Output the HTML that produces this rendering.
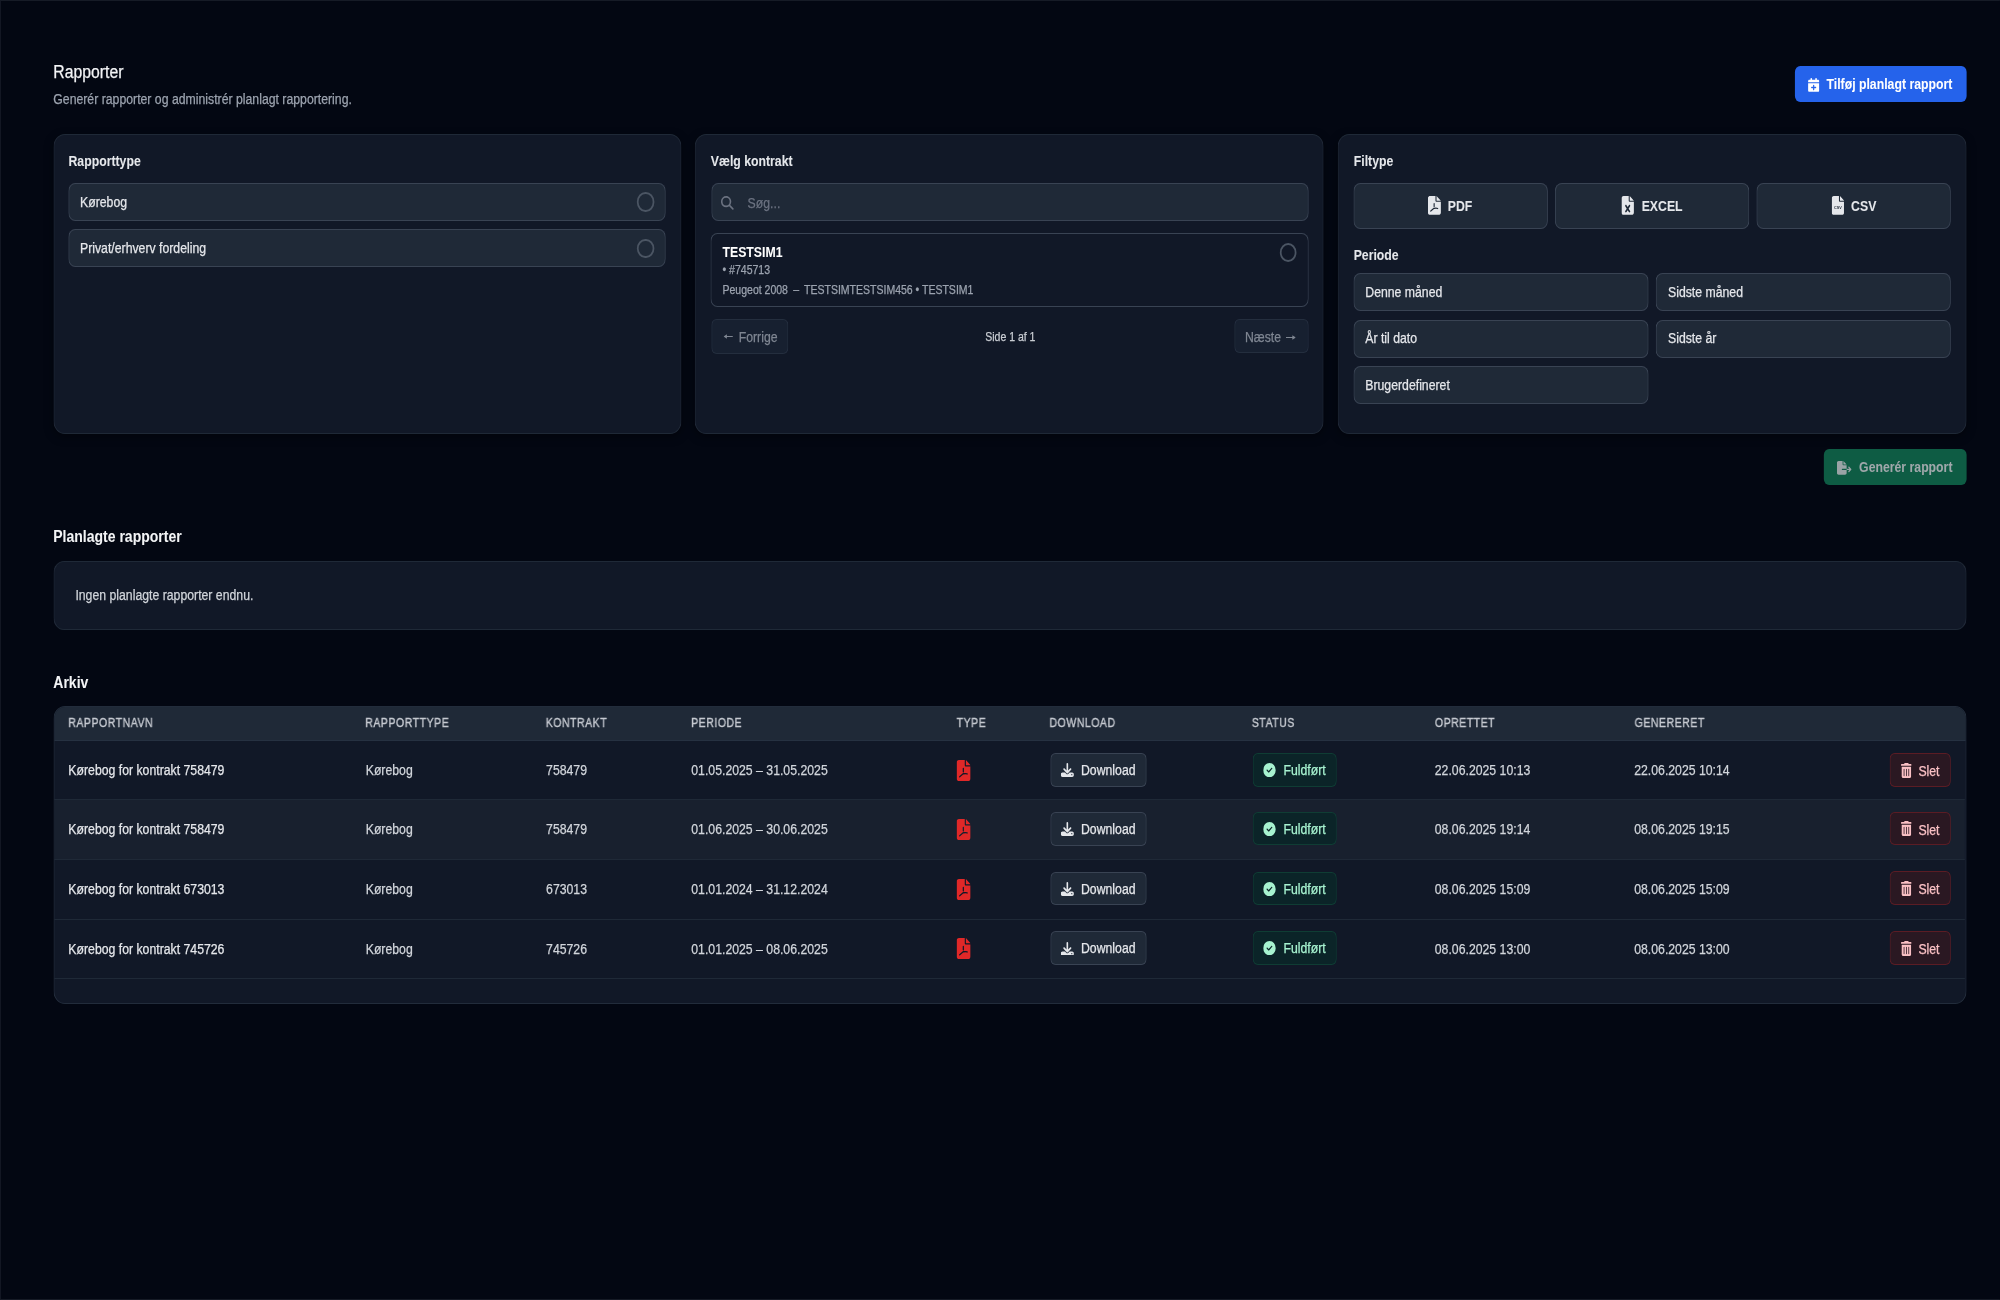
<!DOCTYPE html>
<html><head><meta charset="utf-8"><title>Rapporter</title>
<style>
html,body{margin:0;padding:0;background:#030712;width:2000px;height:1300px;overflow:hidden}
#s{position:absolute;left:0;top:0;width:2283.11px;height:1300px;transform:scaleX(0.876);transform-origin:0 0;font-family:"Liberation Sans",sans-serif}
.a{position:absolute;box-sizing:border-box;margin:0}
.t{white-space:nowrap;-webkit-text-stroke:0.25px currentColor}
</style></head><body><div id="s">
<div class="a" style="left:0;top:0;width:2283.11px;height:1px;background:#161b26"></div>
<div class="a" style="left:0;top:0;width:1.2px;height:1300px;background:#161b26"></div>
<div class="a" style="left:0;top:1299px;width:2283.11px;height:1px;background:#161b26"></div>
<div class="a t" style="left:60.84px;top:59.2px;font-size:18px;line-height:27px;color:#f3f4f6;">Rapporter</div>
<div class="a t" style="left:60.84px;top:88.8px;font-size:14px;line-height:21px;color:#9ca3af;">Generér rapporter og administrér planlagt rapportering.</div>
<div class="a" style="left:2048.52px;top:66.2px;width:196.35px;height:35.6px;background:#2563eb;border-radius:6px;"></div>
<svg class="a" style="left:2063.93px;top:78px;width:12.79px;height:13.8px;color:#fff;" viewBox="0 0 448 512" preserveAspectRatio="none"><path fill="currentColor" fill-rule="evenodd" d="M96 32V64H48C21.5 64 0 85.5 0 112v48H448V112c0-26.5-21.5-48-48-48H352V32c0-17.7-14.3-32-32-32s-32 14.3-32 32V64H160V32c0-17.7-14.3-32-32-32S96 14.3 96 32zM448 192H0V464c0 26.5 21.5 48 48 48H400c26.5 0 48-21.5 48-48V192zM224 248c13.3 0 24 10.7 24 24v56h56c13.3 0 24 10.7 24 24s-10.7 24-24 24H248v56c0 13.3-10.7 24-24 24s-24-10.7-24-24V376H144c-13.3 0-24-10.7-24-24s10.7-24 24-24h56V272c0-13.300 10.7-24 24-24z"/></svg>
<div class="a t" style="left:2085.05px;top:73.5px;font-size:14px;line-height:21px;color:#ffffff;font-weight:700;-webkit-text-stroke:0.05px currentColor;">Tilføj planlagt rapport</div>
<div class="a" style="left:60.5px;top:134px;width:717.24px;height:299.5px;background:#111827;border:1px solid #1f2937;border-left-color:#222b3a;border-right-color:#222b3a;border-radius:13px;box-shadow:0 3px 10px rgba(0,0,0,0.35);"></div>
<div class="a" style="left:793.38px;top:134px;width:717.81px;height:299.5px;background:#111827;border:1px solid #1f2937;border-left-color:#222b3a;border-right-color:#222b3a;border-radius:13px;box-shadow:0 3px 10px rgba(0,0,0,0.35);"></div>
<div class="a" style="left:1527.4px;top:134px;width:717.47px;height:299.5px;background:#111827;border:1px solid #1f2937;border-left-color:#222b3a;border-right-color:#222b3a;border-radius:13px;box-shadow:0 3px 10px rgba(0,0,0,0.35);"></div>
<div class="a t" style="left:78.2px;top:151px;font-size:14px;line-height:21px;color:#e5e7eb;font-weight:700;-webkit-text-stroke:0.05px currentColor;">Rapporttype</div>
<div class="a" style="left:77.63px;top:183px;width:682.65px;height:38.2px;background:#1f2937;border:1px solid #394353;border-left-color:#3e4858;border-right-color:#3e4858;border-radius:8px;"></div>
<div class="a t" style="left:91.32px;top:192px;font-size:14px;line-height:21px;color:#e5e7eb;">Kørebog</div>
<div class="a" style="left:727.07px;top:192.3px;width:19.6px;height:19.6px;border:2px solid #4b5563;border-radius:50%;"></div>
<div class="a" style="left:77.63px;top:229.3px;width:682.65px;height:38.2px;background:#1f2937;border:1px solid #394353;border-left-color:#3e4858;border-right-color:#3e4858;border-radius:8px;"></div>
<div class="a t" style="left:91.32px;top:238.3px;font-size:14px;line-height:21px;color:#e5e7eb;">Privat/erhverv fordeling</div>
<div class="a" style="left:727.07px;top:238.6px;width:19.6px;height:19.6px;border:2px solid #4b5563;border-radius:50%;"></div>
<div class="a t" style="left:811.42px;top:151px;font-size:14px;line-height:21px;color:#e5e7eb;font-weight:700;-webkit-text-stroke:0.05px currentColor;">Vælg kontrakt</div>
<div class="a" style="left:811.87px;top:183.2px;width:681.85px;height:37.6px;background:#1f2937;border:1px solid #394353;border-left-color:#3e4858;border-right-color:#3e4858;border-radius:8px;"></div>
<svg class="a" style="left:823.06px;top:195.9px;width:14.5px;height:13.8px;color:#6b7280;" viewBox="0 0 512 512" preserveAspectRatio="none"><path fill="currentColor" fill-rule="evenodd" d="M416 208c0 45.9-14.9 88.3-40 122.7L502.6 457.4c12.5 12.5 12.5 32.8 0 45.3s-32.8 12.5-45.3 0L330.7 376c-34.4 25.2-76.8 40-122.7 40C93.1 416 0 322.900 0 208S93.1 0 208 0S416 93.1 416 208zM208 352a144 144 0 1 0 0-288 144 144 0 1 0 0 288z"/></svg>
<div class="a t" style="left:853.42px;top:193px;font-size:14px;line-height:21px;color:#6b7280;">Søg...</div>
<div class="a" style="left:811.42px;top:233.2px;width:682.65px;height:74.3px;background:transparent;border:1px solid #394353;border-left-color:#3e4858;border-right-color:#3e4858;border-radius:8px;"></div>
<div class="a t" style="left:824.77px;top:242px;font-size:14px;line-height:21px;color:#ffffff;font-weight:700;-webkit-text-stroke:0.05px currentColor;">TESTSIM1</div>
<div class="a t" style="left:824.77px;top:261.2px;font-size:12px;line-height:18px;color:#9ca3af;">• #745713</div>
<div class="a t" style="left:824.77px;top:281.2px;font-size:12px;line-height:18px;color:#9ca3af;">Peugeot 2008 <span style="display:inline-block;margin:0 2.6px">–</span> TESTSIMTESTSIM456 • TESTSIM1</div>
<div class="a" style="left:1460.52px;top:242.6px;width:19.6px;height:19.6px;border:2px solid #4b5563;border-radius:50%;"></div>
<div class="a" style="left:811.64px;top:319.2px;width:88.81px;height:34.4px;background:#172030;border:1px solid #242e3e;border-left-color:#283243;border-right-color:#283243;border-radius:6px;"></div>
<svg class="a" style="left:826.37px;top:334.3px;width:10.5px;height:5px;color:#7f8692;" viewBox="0 0 100 60" preserveAspectRatio="none"><path fill="none" stroke="currentColor" stroke-width="14" d="M18 30H100"/><path fill="currentColor" d="M0 30L36 4V56z"/></svg>
<div class="a t" style="left:843.26px;top:327px;font-size:14px;line-height:21px;color:#7f8692;">Forrige</div>
<div class="a t" style="left:1124.66px;top:328px;font-size:12px;line-height:18px;color:#c9cdd3;">Side 1 af 1</div>
<div class="a" style="left:1408.68px;top:319.4px;width:85.16px;height:34.1px;background:#172030;border:1px solid #242e3e;border-left-color:#283243;border-right-color:#283243;border-radius:6px;"></div>
<div class="a t" style="left:1421.12px;top:327px;font-size:14px;line-height:21px;color:#7f8692;">Næste</div>
<svg class="a" style="left:1467.81px;top:334.5px;width:11.3px;height:5px;color:#7f8692;" viewBox="0 0 100 60" preserveAspectRatio="none"><path fill="none" stroke="currentColor" stroke-width="14" d="M0 30H82"/><path fill="currentColor" d="M100 30L64 4V56z"/></svg>
<div class="a t" style="left:1545.38px;top:150.9px;font-size:14px;line-height:21px;color:#e5e7eb;font-weight:700;-webkit-text-stroke:0.05px currentColor;">Filtype</div>
<div class="a" style="left:1544.98px;top:183.1px;width:222.03px;height:46px;background:#1f2937;border:1px solid #394353;border-left-color:#3e4858;border-right-color:#3e4858;border-radius:8px;"></div>
<svg class="a" style="left:1630.14px;top:196px;width:14.84px;height:18.8px;color:#e5e7eb;" viewBox="0 0 384 512" preserveAspectRatio="none"><path fill="currentColor" d="M0 64C0 28.7 28.7 0 64 0H224V128c0 17.7 14.3 32 32 32H384V448c0 35.3-28.7 64-64 64H64c-35.3 0-64-28.7-64-64V64zm384 64H256V0L384 128z"/><path fill="none" stroke="#1f2937" stroke-width="34" stroke-linecap="round" stroke-linejoin="round" d="M185 205V285M188 330L85 410M188 335C230 330 260 325 290 340"/></svg>
<div class="a t" style="left:1652.74px;top:196px;font-size:14px;line-height:21px;color:#e5e7eb;font-weight:700;-webkit-text-stroke:0.05px currentColor;">PDF</div>
<div class="a" style="left:1775.23px;top:183.1px;width:222.03px;height:46px;background:#1f2937;border:1px solid #394353;border-left-color:#3e4858;border-right-color:#3e4858;border-radius:8px;"></div>
<svg class="a" style="left:1851.48px;top:196px;width:14.16px;height:18.8px;color:#e5e7eb;" viewBox="0 0 384 512" preserveAspectRatio="none"><path fill="currentColor" fill-rule="evenodd" d="M64 0C28.7 0 0 28.7 0 64V448c0 35.3 28.7 64 64 64H320c35.3 0 64-28.7 64-64V160H256c-17.7 0-32-14.3-32-32V0H64zM256 0V128H384L256 0zM155.7 250.2L192 302.1l36.3-51.9c7.6-10.9 22.6-13.5 33.4-5.9s13.5 22.6 5.9 33.4L221.3 344l46.4 66.2c7.6 10.9 5 25.8-5.9 33.4s-25.8 5-33.4-5.9L192 385.8l-36.3 51.9c-7.6 10.9-22.6 13.5-33.4 5.9s-13.5-22.6-5.9-33.4L162.7 344l-46.4-66.2c-7.6-10.9-5-25.8 5.9-33.4s25.8-5 33.4 5.9z"/></svg>
<div class="a t" style="left:1874.09px;top:196px;font-size:14px;line-height:21px;color:#e5e7eb;font-weight:700;-webkit-text-stroke:0.05px currentColor;">EXCEL</div>
<div class="a" style="left:2005.14px;top:183.1px;width:222.03px;height:46px;background:#1f2937;border:1px solid #394353;border-left-color:#3e4858;border-right-color:#3e4858;border-radius:8px;"></div>
<svg class="a" style="left:2090.64px;top:196px;width:14.16px;height:18.8px;color:#e5e7eb;" viewBox="0 0 384 512" preserveAspectRatio="none"><path fill="currentColor" d="M0 64C0 28.7 28.7 0 64 0H224V128c0 17.7 14.3 32 32 32H384V448c0 35.3-28.7 64-64 64H64c-35.3 0-64-28.7-64-64V64zm384 64H256V0L384 128z"/><text x="192" y="365" text-anchor="middle" font-family="Liberation Sans" font-weight="700" font-size="118" fill="#1f2937">CSV</text></svg>
<div class="a t" style="left:2113.13px;top:196px;font-size:14px;line-height:21px;color:#e5e7eb;font-weight:700;-webkit-text-stroke:0.05px currentColor;">CSV</div>
<div class="a t" style="left:1545.32px;top:244.6px;font-size:14px;line-height:21px;color:#e5e7eb;font-weight:700;-webkit-text-stroke:0.05px currentColor;">Periode</div>
<div class="a" style="left:1545.09px;top:273.1px;width:336.99px;height:38.2px;background:#1f2937;border:1px solid #394353;border-left-color:#3e4858;border-right-color:#3e4858;border-radius:8px;"></div>
<div class="a t" style="left:1558.56px;top:281.9px;font-size:14px;line-height:21px;color:#e5e7eb;">Denne måned</div>
<div class="a" style="left:1890.3px;top:273.1px;width:336.87px;height:38.2px;background:#1f2937;border:1px solid #394353;border-left-color:#3e4858;border-right-color:#3e4858;border-radius:8px;"></div>
<div class="a t" style="left:1904.11px;top:281.9px;font-size:14px;line-height:21px;color:#e5e7eb;">Sidste måned</div>
<div class="a" style="left:1545.09px;top:319.5px;width:336.99px;height:38.2px;background:#1f2937;border:1px solid #394353;border-left-color:#3e4858;border-right-color:#3e4858;border-radius:8px;"></div>
<div class="a t" style="left:1558.56px;top:328.3px;font-size:14px;line-height:21px;color:#e5e7eb;">År til dato</div>
<div class="a" style="left:1890.3px;top:319.5px;width:336.87px;height:38.2px;background:#1f2937;border:1px solid #394353;border-left-color:#3e4858;border-right-color:#3e4858;border-radius:8px;"></div>
<div class="a t" style="left:1904.11px;top:328.3px;font-size:14px;line-height:21px;color:#e5e7eb;">Sidste år</div>
<div class="a" style="left:1545.09px;top:365.8px;width:336.99px;height:38.1px;background:#1f2937;border:1px solid #394353;border-left-color:#3e4858;border-right-color:#3e4858;border-radius:8px;"></div>
<div class="a t" style="left:1558.56px;top:374.6px;font-size:14px;line-height:21px;color:#e5e7eb;">Brugerdefineret</div>
<div class="a" style="left:2082.19px;top:449.4px;width:162.67px;height:35.2px;background:#0e5c44;border-radius:6px;"></div>
<svg class="a" style="left:2097.26px;top:461.1px;width:16.55px;height:13.8px;color:#9aa3a6;" viewBox="0 0 576 512" preserveAspectRatio="none"><path fill="currentColor" d="M0 64C0 28.7 28.7 0 64 0H224V128c0 17.7 14.3 32 32 32H384V288H216c-13.3 0-24 10.7-24 24s10.7 24 24 24H384V448c0 35.3-28.7 64-64 64H64c-35.3 0-64-28.7-64-64V64zM384 336V288H494.1l-39-39c-9.4-9.4-9.4-24.6 0-33.9s24.6-9.4 33.9 0l80 80c9.4 9.4 9.4 24.6 0 33.9l-80 80c-9.4 9.4-24.6 9.4-33.9 0s-9.4-24.6 0-33.9l39-39H384zm0-208H256V0L384 128z"/></svg>
<div class="a t" style="left:2122.26px;top:456.9px;font-size:14px;line-height:21px;color:#a0a8ab;font-weight:700;-webkit-text-stroke:0.05px currentColor;">Generér rapport</div>
<div class="a t" style="left:60.73px;top:525px;font-size:16px;line-height:24px;color:#f3f4f6;font-weight:700;-webkit-text-stroke:0.05px currentColor;">Planlagte rapporter</div>
<div class="a" style="left:60.73px;top:560.8px;width:2184.13px;height:69.6px;background:#111827;border:1px solid #1f2937;border-left-color:#222b3a;border-right-color:#222b3a;border-radius:12px;"></div>
<div class="a t" style="left:86.07px;top:585.4px;font-size:14px;line-height:21px;color:#d1d5db;">Ingen planlagte rapporter endnu.</div>
<div class="a t" style="left:60.84px;top:670.7px;font-size:16px;line-height:24px;color:#f3f4f6;font-weight:700;-webkit-text-stroke:0.05px currentColor;">Arkiv</div>
<div class="a" style="left:60.79px;top:706.2px;width:2183.85px;height:298.1px;background:#111827;border:1px solid #222c3b;border-left-color:#273141;border-right-color:#273141;border-radius:13px;overflow:hidden;"></div>
<div class="a" style="left:61.79px;top:707.2px;width:2181.85px;height:33.5px;background:#1f2937;border-radius:12px 12px 0 0;border-bottom:1px solid #263141"></div>
<div class="a t" style="left:77.97px;top:714.1px;font-size:12px;line-height:18px;color:#c6cad1;letter-spacing:0.6px;will-change:transform;-webkit-text-stroke:0.35px currentColor;">RAPPORTNAVN</div>
<div class="a t" style="left:417.47px;top:714.1px;font-size:12px;line-height:18px;color:#c6cad1;letter-spacing:0.6px;will-change:transform;-webkit-text-stroke:0.35px currentColor;">RAPPORTTYPE</div>
<div class="a t" style="left:623.4px;top:714.1px;font-size:12px;line-height:18px;color:#c6cad1;letter-spacing:0.6px;will-change:transform;-webkit-text-stroke:0.35px currentColor;">KONTRAKT</div>
<div class="a t" style="left:789.16px;top:714.1px;font-size:12px;line-height:18px;color:#c6cad1;letter-spacing:0.6px;will-change:transform;-webkit-text-stroke:0.35px currentColor;">PERIODE</div>
<div class="a t" style="left:1092.47px;top:714.1px;font-size:12px;line-height:18px;color:#c6cad1;letter-spacing:0.6px;will-change:transform;-webkit-text-stroke:0.35px currentColor;">TYPE</div>
<div class="a t" style="left:1198.06px;top:714.1px;font-size:12px;line-height:18px;color:#c6cad1;letter-spacing:0.6px;will-change:transform;-webkit-text-stroke:0.35px currentColor;">DOWNLOAD</div>
<div class="a t" style="left:1428.88px;top:714.1px;font-size:12px;line-height:18px;color:#c6cad1;letter-spacing:0.6px;will-change:transform;-webkit-text-stroke:0.35px currentColor;">STATUS</div>
<div class="a t" style="left:1637.9px;top:714.1px;font-size:12px;line-height:18px;color:#c6cad1;letter-spacing:0.6px;will-change:transform;-webkit-text-stroke:0.35px currentColor;">OPRETTET</div>
<div class="a t" style="left:1865.53px;top:714.1px;font-size:12px;line-height:18px;color:#c6cad1;letter-spacing:0.6px;will-change:transform;-webkit-text-stroke:0.35px currentColor;">GENERERET</div>
<div class="a" style="left:61.93px;top:799px;width:2181.56px;height:1px;background:#1f2937;"></div>
<div class="a t" style="left:77.97px;top:760.4px;font-size:14px;line-height:21px;color:#e5e7eb;">Kørebog for kontrakt 758479</div>
<div class="a t" style="left:417.47px;top:760.4px;font-size:14px;line-height:21px;color:#d1d5db;">Kørebog</div>
<div class="a t" style="left:623.4px;top:760.4px;font-size:14px;line-height:21px;color:#d1d5db;">758479</div>
<div class="a t" style="left:789.16px;top:760.4px;font-size:14px;line-height:21px;color:#d1d5db;">01.05.2025 – 31.05.2025</div>
<svg class="a" style="left:1091.55px;top:760px;width:15.98px;height:21px;color:#e02828;" viewBox="0 0 384 512" preserveAspectRatio="none"><path fill="currentColor" d="M0 64C0 28.7 28.7 0 64 0H224V128c0 17.7 14.3 32 32 32H384V448c0 35.3-28.7 64-64 64H64c-35.3 0-64-28.7-64-64V64zm384 64H256V0L384 128z"/><path fill="none" stroke="#111827" stroke-width="34" stroke-linecap="round" stroke-linejoin="round" d="M185 205V285M188 330L85 410M188 335C230 330 260 325 290 340"/></svg>
<div class="a" style="left:1198.63px;top:752.9px;width:110.27px;height:33.9px;background:#1f2937;border:1px solid #394353;border-left-color:#3e4858;border-right-color:#3e4858;border-radius:6px;"></div>
<svg class="a" style="left:1211.19px;top:763.2px;width:14.84px;height:13.9px;color:#e5e7eb;" viewBox="0 0 512 512" preserveAspectRatio="none"><path fill="currentColor" d="M288 32c0-17.7-14.3-32-32-32s-32 14.3-32 32V274.7l-73.4-73.4c-12.5-12.5-32.8-12.5-45.3 0s-12.5 32.8 0 45.3l128 128c12.5 12.5 32.8 12.5 45.3 0l128-128c12.5-12.5 12.5-32.8 0-45.3s-32.8-12.5-45.3 0L288 274.7V32zM64 352c-35.3 0-64 28.7-64 64v32c0 35.3 28.7 64 64 64H448c35.3 0 64-28.7 64-64V416c0-35.3-28.7-64-64-64H346.5l-45.3 45.3c-25 25-65.5 25-90.5 0L165.5 352H64zm368 56a24 24 0 1 1 0 48 24 24 0 1 1 0-48z"/></svg>
<div class="a t" style="left:1234.02px;top:759.9px;font-size:14px;line-height:21px;color:#e5e7eb;">Download</div>
<div class="a" style="left:1430.25px;top:753px;width:95.43px;height:33.5px;background:#0b2428;border:1px solid #0f3d34;border-left-color:#0f4036;border-right-color:#0f4036;border-radius:6px;"></div>
<svg class="a" style="left:1442.35px;top:762.9px;width:14.27px;height:14.3px;color:#a7f3d0;" viewBox="0 0 512 512" preserveAspectRatio="none"><path fill="currentColor" d="M256 512A256 256 0 1 0 256 0a256 256 0 1 0 0 512zM369 209L241 337c-9.4 9.4-24.6 9.4-33.9 0l-64-64c-9.4-9.4-9.4-24.6 0-33.9s24.6-9.4 33.9 0l47 47L335 175c9.4-9.4 24.6-9.4 33.9 0s9.4 24.6 0 33.9z"/></svg>
<div class="a t" style="left:1465.18px;top:760px;font-size:14px;line-height:21px;color:#a7f3d0;">Fuldført</div>
<div class="a t" style="left:1637.9px;top:760.4px;font-size:14px;line-height:21px;color:#d1d5db;">22.06.2025 10:13</div>
<div class="a t" style="left:1865.53px;top:760.4px;font-size:14px;line-height:21px;color:#d1d5db;">22.06.2025 10:14</div>
<div class="a" style="left:2156.85px;top:752.8px;width:70.32px;height:33.8px;background:#2a1822;border:1px solid #5b1c24;border-left-color:#611e26;border-right-color:#611e26;border-radius:6px;"></div>
<svg class="a" style="left:2169.63px;top:762.6px;width:12.56px;height:15px;color:#f9c0c4;" viewBox="0 0 448 512" preserveAspectRatio="none"><path fill="currentColor" d="M135.2 17.7C140.6 6.8 151.7 0 163.8 0H284.2c12.1 0 23.2 6.8 28.6 17.7L320 32h96c17.7 0 32 14.3 32 32s-14.3 32-32 32H32C14.3 96 0 81.7 0 64S14.3 32 32 32h96l7.2-14.3zM32 128H416V448c0 35.3-28.7 64-64 64H96c-35.3 0-64-28.7-64-64V128zm96 64c-8.8 0-16 7.2-16 16V432c0 8.8 7.2 16 16 16s16-7.2 16-16V208c0-8.8-7.2-16-16-16zm96 0c-8.8 0-16 7.2-16 16V432c0 8.8 7.2 16 16 16s16-7.2 16-16V208c0-8.8-7.2-16-16-16zm96 0c-8.8 0-16 7.2-16 16V432c0 8.8 7.2 16 16 16s16-7.2 16-16V208c0-8.8-7.2-16-16-16z"/></svg>
<div class="a t" style="left:2189.95px;top:760.8px;font-size:14px;line-height:21px;color:#f9c0c4;">Slet</div>
<div class="a" style="left:61.93px;top:799.5px;width:2181.56px;height:59.8px;background:#18202e;"></div>
<div class="a" style="left:61.93px;top:858.8px;width:2181.56px;height:1px;background:#1f2937;"></div>
<div class="a t" style="left:77.97px;top:819.2px;font-size:14px;line-height:21px;color:#e5e7eb;">Kørebog for kontrakt 758479</div>
<div class="a t" style="left:417.47px;top:819.2px;font-size:14px;line-height:21px;color:#d1d5db;">Kørebog</div>
<div class="a t" style="left:623.4px;top:819.2px;font-size:14px;line-height:21px;color:#d1d5db;">758479</div>
<div class="a t" style="left:789.16px;top:819.2px;font-size:14px;line-height:21px;color:#d1d5db;">01.06.2025 – 30.06.2025</div>
<svg class="a" style="left:1091.55px;top:818.8px;width:15.98px;height:21px;color:#e02828;" viewBox="0 0 384 512" preserveAspectRatio="none"><path fill="currentColor" d="M0 64C0 28.7 28.7 0 64 0H224V128c0 17.7 14.3 32 32 32H384V448c0 35.3-28.7 64-64 64H64c-35.3 0-64-28.7-64-64V64zm384 64H256V0L384 128z"/><path fill="none" stroke="#18202e" stroke-width="34" stroke-linecap="round" stroke-linejoin="round" d="M185 205V285M188 330L85 410M188 335C230 330 260 325 290 340"/></svg>
<div class="a" style="left:1198.63px;top:811.7px;width:110.27px;height:33.9px;background:#1f2937;border:1px solid #394353;border-left-color:#3e4858;border-right-color:#3e4858;border-radius:6px;"></div>
<svg class="a" style="left:1211.19px;top:822px;width:14.84px;height:13.9px;color:#e5e7eb;" viewBox="0 0 512 512" preserveAspectRatio="none"><path fill="currentColor" d="M288 32c0-17.7-14.3-32-32-32s-32 14.3-32 32V274.7l-73.4-73.4c-12.5-12.5-32.8-12.5-45.3 0s-12.5 32.8 0 45.3l128 128c12.5 12.5 32.8 12.5 45.3 0l128-128c12.5-12.5 12.5-32.8 0-45.3s-32.8-12.5-45.3 0L288 274.7V32zM64 352c-35.3 0-64 28.7-64 64v32c0 35.3 28.7 64 64 64H448c35.3 0 64-28.7 64-64V416c0-35.3-28.7-64-64-64H346.5l-45.3 45.3c-25 25-65.5 25-90.5 0L165.5 352H64zm368 56a24 24 0 1 1 0 48 24 24 0 1 1 0-48z"/></svg>
<div class="a t" style="left:1234.02px;top:818.7px;font-size:14px;line-height:21px;color:#e5e7eb;">Download</div>
<div class="a" style="left:1430.25px;top:811.8px;width:95.43px;height:33.5px;background:#0b2428;border:1px solid #0f3d34;border-left-color:#0f4036;border-right-color:#0f4036;border-radius:6px;"></div>
<svg class="a" style="left:1442.35px;top:821.7px;width:14.27px;height:14.3px;color:#a7f3d0;" viewBox="0 0 512 512" preserveAspectRatio="none"><path fill="currentColor" d="M256 512A256 256 0 1 0 256 0a256 256 0 1 0 0 512zM369 209L241 337c-9.4 9.4-24.6 9.4-33.9 0l-64-64c-9.4-9.4-9.4-24.6 0-33.9s24.6-9.4 33.9 0l47 47L335 175c9.4-9.4 24.6-9.4 33.9 0s9.4 24.6 0 33.9z"/></svg>
<div class="a t" style="left:1465.18px;top:818.8px;font-size:14px;line-height:21px;color:#a7f3d0;">Fuldført</div>
<div class="a t" style="left:1637.9px;top:819.2px;font-size:14px;line-height:21px;color:#d1d5db;">08.06.2025 19:14</div>
<div class="a t" style="left:1865.53px;top:819.2px;font-size:14px;line-height:21px;color:#d1d5db;">08.06.2025 19:15</div>
<div class="a" style="left:2156.85px;top:811.6px;width:70.32px;height:33.8px;background:#2a1822;border:1px solid #5b1c24;border-left-color:#611e26;border-right-color:#611e26;border-radius:6px;"></div>
<svg class="a" style="left:2169.63px;top:821.4px;width:12.56px;height:15px;color:#f9c0c4;" viewBox="0 0 448 512" preserveAspectRatio="none"><path fill="currentColor" d="M135.2 17.7C140.6 6.8 151.7 0 163.8 0H284.2c12.1 0 23.2 6.8 28.6 17.7L320 32h96c17.7 0 32 14.3 32 32s-14.3 32-32 32H32C14.3 96 0 81.7 0 64S14.3 32 32 32h96l7.2-14.3zM32 128H416V448c0 35.3-28.7 64-64 64H96c-35.3 0-64-28.7-64-64V128zm96 64c-8.8 0-16 7.2-16 16V432c0 8.8 7.2 16 16 16s16-7.2 16-16V208c0-8.8-7.2-16-16-16zm96 0c-8.8 0-16 7.2-16 16V432c0 8.8 7.2 16 16 16s16-7.2 16-16V208c0-8.8-7.2-16-16-16zm96 0c-8.8 0-16 7.2-16 16V432c0 8.8 7.2 16 16 16s16-7.2 16-16V208c0-8.8-7.2-16-16-16z"/></svg>
<div class="a t" style="left:2189.95px;top:819.6px;font-size:14px;line-height:21px;color:#f9c0c4;">Slet</div>
<div class="a" style="left:61.93px;top:918.5px;width:2181.56px;height:1px;background:#1f2937;"></div>
<div class="a t" style="left:77.97px;top:879px;font-size:14px;line-height:21px;color:#e5e7eb;">Kørebog for kontrakt 673013</div>
<div class="a t" style="left:417.47px;top:879px;font-size:14px;line-height:21px;color:#d1d5db;">Kørebog</div>
<div class="a t" style="left:623.4px;top:879px;font-size:14px;line-height:21px;color:#d1d5db;">673013</div>
<div class="a t" style="left:789.16px;top:879px;font-size:14px;line-height:21px;color:#d1d5db;">01.01.2024 – 31.12.2024</div>
<svg class="a" style="left:1091.55px;top:878.6px;width:15.98px;height:21px;color:#e02828;" viewBox="0 0 384 512" preserveAspectRatio="none"><path fill="currentColor" d="M0 64C0 28.7 28.7 0 64 0H224V128c0 17.7 14.3 32 32 32H384V448c0 35.3-28.7 64-64 64H64c-35.3 0-64-28.7-64-64V64zm384 64H256V0L384 128z"/><path fill="none" stroke="#111827" stroke-width="34" stroke-linecap="round" stroke-linejoin="round" d="M185 205V285M188 330L85 410M188 335C230 330 260 325 290 340"/></svg>
<div class="a" style="left:1198.63px;top:871.5px;width:110.27px;height:33.9px;background:#1f2937;border:1px solid #394353;border-left-color:#3e4858;border-right-color:#3e4858;border-radius:6px;"></div>
<svg class="a" style="left:1211.19px;top:881.8px;width:14.84px;height:13.9px;color:#e5e7eb;" viewBox="0 0 512 512" preserveAspectRatio="none"><path fill="currentColor" d="M288 32c0-17.7-14.3-32-32-32s-32 14.3-32 32V274.7l-73.4-73.4c-12.5-12.5-32.8-12.5-45.3 0s-12.5 32.8 0 45.3l128 128c12.5 12.5 32.8 12.5 45.3 0l128-128c12.5-12.5 12.5-32.8 0-45.3s-32.8-12.5-45.3 0L288 274.7V32zM64 352c-35.3 0-64 28.7-64 64v32c0 35.3 28.7 64 64 64H448c35.3 0 64-28.7 64-64V416c0-35.3-28.7-64-64-64H346.5l-45.3 45.3c-25 25-65.5 25-90.5 0L165.5 352H64zm368 56a24 24 0 1 1 0 48 24 24 0 1 1 0-48z"/></svg>
<div class="a t" style="left:1234.02px;top:878.5px;font-size:14px;line-height:21px;color:#e5e7eb;">Download</div>
<div class="a" style="left:1430.25px;top:871.6px;width:95.43px;height:33.5px;background:#0b2428;border:1px solid #0f3d34;border-left-color:#0f4036;border-right-color:#0f4036;border-radius:6px;"></div>
<svg class="a" style="left:1442.35px;top:881.5px;width:14.27px;height:14.3px;color:#a7f3d0;" viewBox="0 0 512 512" preserveAspectRatio="none"><path fill="currentColor" d="M256 512A256 256 0 1 0 256 0a256 256 0 1 0 0 512zM369 209L241 337c-9.4 9.4-24.6 9.4-33.9 0l-64-64c-9.4-9.4-9.4-24.6 0-33.9s24.6-9.4 33.9 0l47 47L335 175c9.4-9.4 24.6-9.4 33.9 0s9.4 24.6 0 33.9z"/></svg>
<div class="a t" style="left:1465.18px;top:878.6px;font-size:14px;line-height:21px;color:#a7f3d0;">Fuldført</div>
<div class="a t" style="left:1637.9px;top:879px;font-size:14px;line-height:21px;color:#d1d5db;">08.06.2025 15:09</div>
<div class="a t" style="left:1865.53px;top:879px;font-size:14px;line-height:21px;color:#d1d5db;">08.06.2025 15:09</div>
<div class="a" style="left:2156.85px;top:871.4px;width:70.32px;height:33.8px;background:#2a1822;border:1px solid #5b1c24;border-left-color:#611e26;border-right-color:#611e26;border-radius:6px;"></div>
<svg class="a" style="left:2169.63px;top:881.2px;width:12.56px;height:15px;color:#f9c0c4;" viewBox="0 0 448 512" preserveAspectRatio="none"><path fill="currentColor" d="M135.2 17.7C140.6 6.8 151.7 0 163.8 0H284.2c12.1 0 23.2 6.8 28.6 17.7L320 32h96c17.7 0 32 14.3 32 32s-14.3 32-32 32H32C14.3 96 0 81.7 0 64S14.3 32 32 32h96l7.2-14.3zM32 128H416V448c0 35.3-28.7 64-64 64H96c-35.3 0-64-28.7-64-64V128zm96 64c-8.8 0-16 7.2-16 16V432c0 8.8 7.2 16 16 16s16-7.2 16-16V208c0-8.8-7.2-16-16-16zm96 0c-8.8 0-16 7.2-16 16V432c0 8.8 7.2 16 16 16s16-7.2 16-16V208c0-8.8-7.2-16-16-16zm96 0c-8.8 0-16 7.2-16 16V432c0 8.8 7.2 16 16 16s16-7.2 16-16V208c0-8.8-7.2-16-16-16z"/></svg>
<div class="a t" style="left:2189.95px;top:879.4px;font-size:14px;line-height:21px;color:#f9c0c4;">Slet</div>
<div class="a" style="left:61.93px;top:978px;width:2181.56px;height:1px;background:#1f2937;"></div>
<div class="a t" style="left:77.97px;top:938.7px;font-size:14px;line-height:21px;color:#e5e7eb;">Kørebog for kontrakt 745726</div>
<div class="a t" style="left:417.47px;top:938.7px;font-size:14px;line-height:21px;color:#d1d5db;">Kørebog</div>
<div class="a t" style="left:623.4px;top:938.7px;font-size:14px;line-height:21px;color:#d1d5db;">745726</div>
<div class="a t" style="left:789.16px;top:938.7px;font-size:14px;line-height:21px;color:#d1d5db;">01.01.2025 – 08.06.2025</div>
<svg class="a" style="left:1091.55px;top:938.3px;width:15.98px;height:21px;color:#e02828;" viewBox="0 0 384 512" preserveAspectRatio="none"><path fill="currentColor" d="M0 64C0 28.7 28.7 0 64 0H224V128c0 17.7 14.3 32 32 32H384V448c0 35.3-28.7 64-64 64H64c-35.3 0-64-28.7-64-64V64zm384 64H256V0L384 128z"/><path fill="none" stroke="#111827" stroke-width="34" stroke-linecap="round" stroke-linejoin="round" d="M185 205V285M188 330L85 410M188 335C230 330 260 325 290 340"/></svg>
<div class="a" style="left:1198.63px;top:931.2px;width:110.27px;height:33.9px;background:#1f2937;border:1px solid #394353;border-left-color:#3e4858;border-right-color:#3e4858;border-radius:6px;"></div>
<svg class="a" style="left:1211.19px;top:941.5px;width:14.84px;height:13.9px;color:#e5e7eb;" viewBox="0 0 512 512" preserveAspectRatio="none"><path fill="currentColor" d="M288 32c0-17.7-14.3-32-32-32s-32 14.3-32 32V274.7l-73.4-73.4c-12.5-12.5-32.8-12.5-45.3 0s-12.5 32.8 0 45.3l128 128c12.5 12.5 32.8 12.5 45.3 0l128-128c12.5-12.5 12.5-32.8 0-45.3s-32.8-12.5-45.3 0L288 274.7V32zM64 352c-35.3 0-64 28.7-64 64v32c0 35.3 28.7 64 64 64H448c35.3 0 64-28.7 64-64V416c0-35.3-28.7-64-64-64H346.5l-45.3 45.3c-25 25-65.5 25-90.5 0L165.5 352H64zm368 56a24 24 0 1 1 0 48 24 24 0 1 1 0-48z"/></svg>
<div class="a t" style="left:1234.02px;top:938.2px;font-size:14px;line-height:21px;color:#e5e7eb;">Download</div>
<div class="a" style="left:1430.25px;top:931.3px;width:95.43px;height:33.5px;background:#0b2428;border:1px solid #0f3d34;border-left-color:#0f4036;border-right-color:#0f4036;border-radius:6px;"></div>
<svg class="a" style="left:1442.35px;top:941.2px;width:14.27px;height:14.3px;color:#a7f3d0;" viewBox="0 0 512 512" preserveAspectRatio="none"><path fill="currentColor" d="M256 512A256 256 0 1 0 256 0a256 256 0 1 0 0 512zM369 209L241 337c-9.4 9.4-24.6 9.4-33.9 0l-64-64c-9.4-9.4-9.4-24.6 0-33.9s24.6-9.4 33.9 0l47 47L335 175c9.4-9.4 24.6-9.4 33.9 0s9.4 24.6 0 33.9z"/></svg>
<div class="a t" style="left:1465.18px;top:938.3px;font-size:14px;line-height:21px;color:#a7f3d0;">Fuldført</div>
<div class="a t" style="left:1637.9px;top:938.7px;font-size:14px;line-height:21px;color:#d1d5db;">08.06.2025 13:00</div>
<div class="a t" style="left:1865.53px;top:938.7px;font-size:14px;line-height:21px;color:#d1d5db;">08.06.2025 13:00</div>
<div class="a" style="left:2156.85px;top:931.1px;width:70.32px;height:33.8px;background:#2a1822;border:1px solid #5b1c24;border-left-color:#611e26;border-right-color:#611e26;border-radius:6px;"></div>
<svg class="a" style="left:2169.63px;top:940.9px;width:12.56px;height:15px;color:#f9c0c4;" viewBox="0 0 448 512" preserveAspectRatio="none"><path fill="currentColor" d="M135.2 17.7C140.6 6.8 151.7 0 163.8 0H284.2c12.1 0 23.2 6.8 28.6 17.7L320 32h96c17.7 0 32 14.3 32 32s-14.3 32-32 32H32C14.3 96 0 81.7 0 64S14.3 32 32 32h96l7.2-14.3zM32 128H416V448c0 35.3-28.7 64-64 64H96c-35.3 0-64-28.7-64-64V128zm96 64c-8.8 0-16 7.2-16 16V432c0 8.8 7.2 16 16 16s16-7.2 16-16V208c0-8.8-7.2-16-16-16zm96 0c-8.8 0-16 7.2-16 16V432c0 8.8 7.2 16 16 16s16-7.2 16-16V208c0-8.8-7.2-16-16-16zm96 0c-8.8 0-16 7.2-16 16V432c0 8.8 7.2 16 16 16s16-7.2 16-16V208c0-8.8-7.2-16-16-16z"/></svg>
<div class="a t" style="left:2189.95px;top:939.1px;font-size:14px;line-height:21px;color:#f9c0c4;">Slet</div>
</div></body></html>
